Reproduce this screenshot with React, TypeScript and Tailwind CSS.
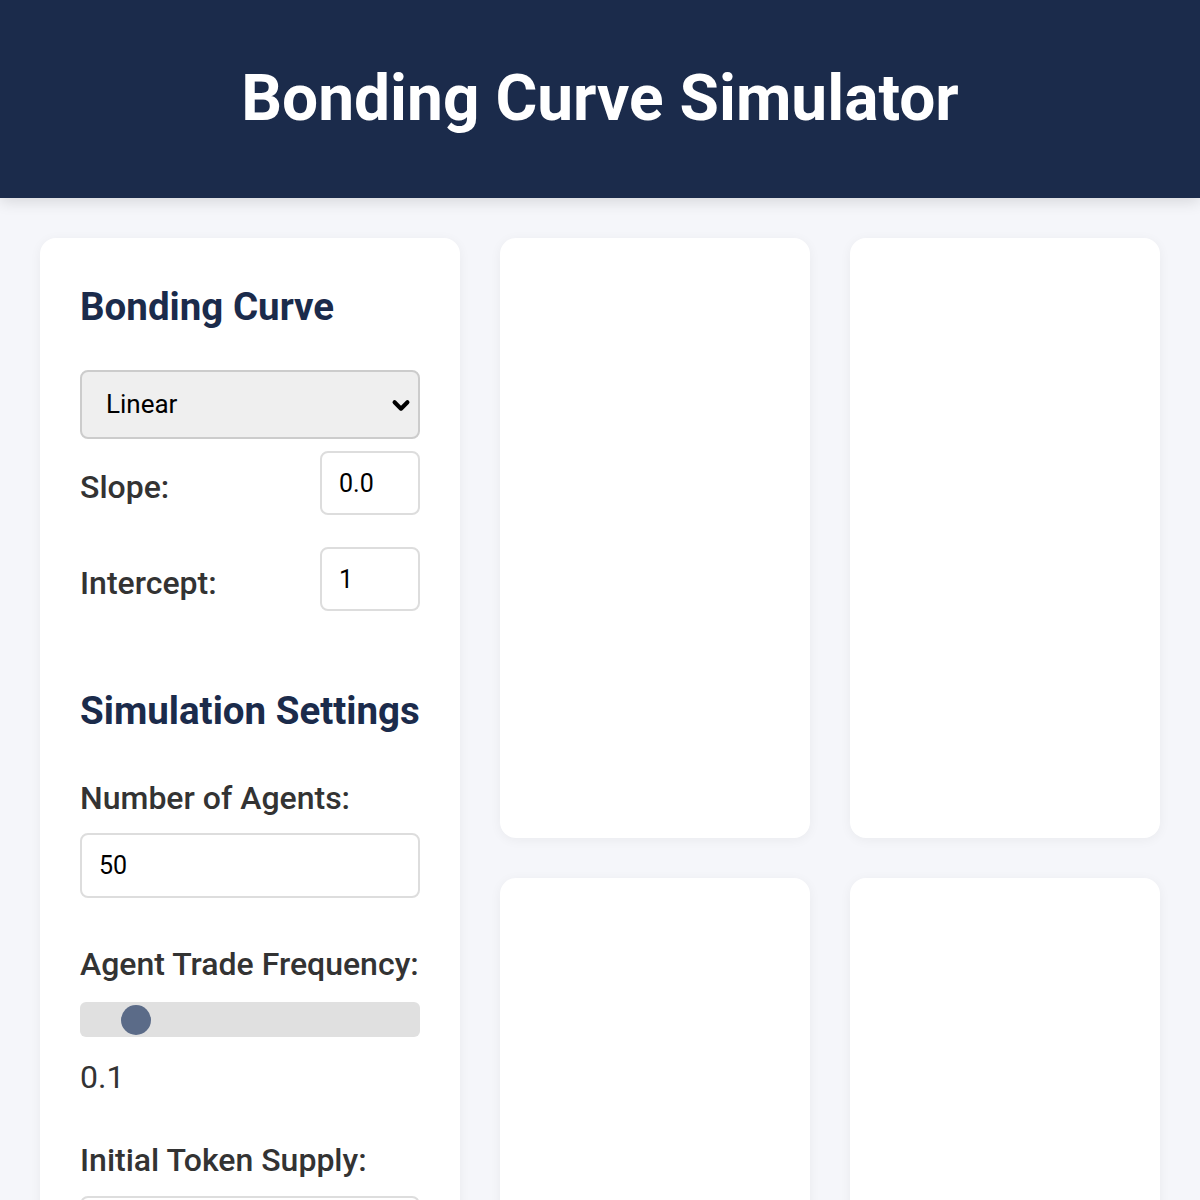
import { useState } from "react";

const ChartCard = () => (
  <div className="h-[600px] rounded-2xl bg-white shadow-[0_2px_12px_rgba(0,0,0,0.05)]" />
);

export default function App() {
  const [curve, setCurve] = useState("linear");
  const [slope, setSlope] = useState("0.001");
  const [intercept, setIntercept] = useState("1");
  const [agents, setAgents] = useState("50");
  const [freq, setFreq] = useState(0.1);
  const [supply, setSupply] = useState("1000");

  const inputCls =
    "h-[65px] rounded-lg border-2 border-[#dddddd] bg-white px-[17px] text-[25px] text-black outline-none";
  const labelCls = "block text-[32px] font-medium leading-[45px] text-[#333333]";

  return (
    <div className="min-h-screen bg-[#f5f6fa] font-['Roboto',sans-serif]">
      <header className="relative z-10 flex h-[198px] items-center justify-center bg-[#1b2b4b] shadow-[0_4px_14px_rgba(0,0,0,0.12)]">
        <h1 className="text-[64px] font-bold leading-none text-white">Bonding Curve Simulator</h1>
      </header>

      <main className="flex items-start gap-10 p-10">
        <aside className="w-[420px] shrink-0 rounded-2xl bg-white p-10 shadow-[0_2px_12px_rgba(0,0,0,0.05)]">
          <h2 className="mb-[34px] text-[38.5px] font-bold leading-[58px] text-[#1b2b4b]">Bonding Curve</h2>

          <div className="relative mb-3">
            <select
              value={curve}
              onChange={(e) => setCurve(e.target.value)}
              className="h-[69px] w-full appearance-none rounded-lg border-2 border-[#cccccc] bg-[#efefef] pl-[24px] text-[26px] text-black outline-none"
            >
              <option value="linear">Linear</option>
              <option value="exponential">Exponential</option>
              <option value="logarithmic">Logarithmic</option>
            </select>
            <svg
              className="pointer-events-none absolute right-[8px] top-1/2 h-[22px] w-[22px] -translate-y-1/2"
              viewBox="0 0 24 24"
              fill="none"
              stroke="black"
              strokeWidth="4.5"
              strokeLinecap="round"
              strokeLinejoin="round"
            >
              <path d="M5 9l7 7 7-7" />
            </svg>
          </div>

          <div className="mb-8 flex items-center justify-between">
            <label className={`${labelCls} pt-2`}>Slope:</label>
            <input
              type="number"
              value={slope}
              onChange={(e) => setSlope(e.target.value)}
              className={`${inputCls} !h-[64px] w-[100px] !pr-[30px]`}
            />
          </div>

          <div className="flex items-center justify-between">
            <label className={`${labelCls} pt-2`}>Intercept:</label>
            <input
              type="number"
              value={intercept}
              onChange={(e) => setIntercept(e.target.value)}
              className={`${inputCls} !h-[64px] w-[100px] !pr-[30px]`}
            />
          </div>

          <h2 className="mb-9 mt-[71px] text-[38.5px] font-bold leading-[58px] text-[#1b2b4b]">
            Simulation Settings
          </h2>

          <label className={`${labelCls} mb-3`}>Number of Agents:</label>
          <input
            type="number"
            value={agents}
            onChange={(e) => setAgents(e.target.value)}
            className={`${inputCls} w-full`}
          />

          <label className={`${labelCls} mb-[15px] mt-[44px]`}>Agent Trade Frequency:</label>
          <input
            type="range"
            min={0}
            max={0.75}
            step={0.01}
            value={freq}
            onChange={(e) => setFreq(parseFloat(e.target.value))}
            className="block h-[35px] w-full appearance-none rounded-md bg-[#e0e0e0] outline-none [&::-webkit-slider-thumb]:h-[30px] [&::-webkit-slider-thumb]:w-[30px] [&::-webkit-slider-thumb]:appearance-none [&::-webkit-slider-thumb]:rounded-full [&::-webkit-slider-thumb]:bg-[#5b6b88]"
          />
          <div className="mt-[18px] text-[32px] leading-[45px] text-[#333333]">{freq}</div>

          <label className={`${labelCls} mb-[13px] mt-[38px]`}>Initial Token Supply:</label>
          <input
            type="number"
            value={supply}
            onChange={(e) => setSupply(e.target.value)}
            className={`${inputCls} w-full`}
          />
        </aside>

        <section className="grid flex-1 grid-cols-2 gap-10">
          <ChartCard />
          <ChartCard />
          <ChartCard />
          <ChartCard />
        </section>
      </main>
    </div>
  );
}
